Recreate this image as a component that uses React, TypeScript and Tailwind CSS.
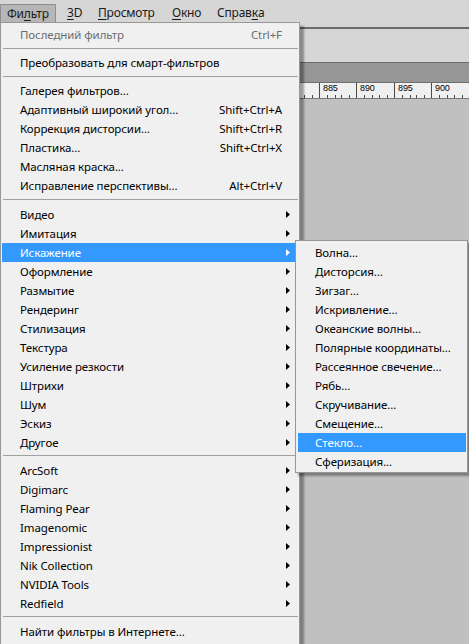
import React from "react";

type Row =
  | { kind: "item"; label: string; shortcut?: string; sub?: boolean; disabled?: boolean; active?: boolean }
  | { kind: "sep"; h: string; off: string };

const item = (label: string, extra: Partial<{ shortcut: string; sub: boolean; disabled: boolean; active: boolean }> = {}): Row => ({
  kind: "item",
  label,
  ...extra,
});

const mainRows: Row[] = [
  item("Последний фильтр", { shortcut: "Ctrl+F", disabled: true }),
  { kind: "sep", h: "h-[9px]", off: "pt-[4px]" },
  item("Преобразовать для смарт-фильтров"),
  { kind: "sep", h: "h-[9px]", off: "pt-[4px]" },
  item("Галерея фильтров..."),
  item("Адаптивный широкий угол...", { shortcut: "Shift+Ctrl+A" }),
  item("Коррекция дисторсии...", { shortcut: "Shift+Ctrl+R" }),
  item("Пластика...", { shortcut: "Shift+Ctrl+X" }),
  item("Масляная краска..."),
  item("Исправление перспективы...", { shortcut: "Alt+Ctrl+V" }),
  { kind: "sep", h: "h-[10px]", off: "pt-[4px]" },
  item("Видео", { sub: true }),
  item("Имитация", { sub: true }),
  item("Искажение", { sub: true, active: true }),
  item("Оформление", { sub: true }),
  item("Размытие", { sub: true }),
  item("Рендеринг", { sub: true }),
  item("Стилизация", { sub: true }),
  item("Текстура", { sub: true }),
  item("Усиление резкости", { sub: true }),
  item("Штрихи", { sub: true }),
  item("Шум", { sub: true }),
  item("Эскиз", { sub: true }),
  item("Другое", { sub: true }),
  { kind: "sep", h: "h-[9px]", off: "pt-[3px]" },
  item("ArcSoft", { sub: true }),
  item("Digimarc", { sub: true }),
  item("Flaming Pear", { sub: true }),
  item("Imagenomic", { sub: true }),
  item("Impressionist", { sub: true }),
  item("Nik Collection", { sub: true }),
  item("NVIDIA Tools", { sub: true }),
  item("Redfield", { sub: true }),
  { kind: "sep", h: "h-[9px]", off: "pt-[3px]" },
  item("Найти фильтры в Интернете..."),
];

const subRows = [
  "Волна...",
  "Дисторсия...",
  "Зигзаг...",
  "Искривление...",
  "Океанские волны...",
  "Полярные координаты...",
  "Рассеянное свечение...",
  "Рябь...",
  "Скручивание...",
  "Смещение...",
  "Стекло...",
  "Сферизация...",
];

function Arrow({ white }: { white?: boolean }) {
  return (
    <svg width="4" height="7" viewBox="0 0 4 7" className="ml-[4px]">
      <path d="M0 0 L4 3.5 L0 7 Z" fill={white ? "#ffffff" : "#000000"} />
    </svg>
  );
}

function MenuBar() {
  return (
    <div className="flex h-[27px] pt-[4px] bg-[#d6d6d6] text-[12px] tracking-[-0.2px] text-[#1a1a1a]">
      <div className="flex h-[18px] w-[56px] items-center border border-b-0 border-[#8e8e8e] bg-[#b6b6b6] pl-[6px]">
        Фи<span className="underline underline-offset-2">л</span>ьтр
      </div>
      <div className="flex h-[18px] w-[35px] items-center pl-[11px]">
        <span className="underline underline-offset-2">3</span>D
      </div>
      <div className="flex h-[18px] w-[74px] items-center pl-[7px]">
        <span className="underline underline-offset-2">П</span>росмотр
      </div>
      <div className="flex h-[18px] w-[45px] items-center pl-[7px]">
        <span className="underline underline-offset-2">О</span>кно
      </div>
      <div className="flex h-[18px] items-center pl-[7px]">
        Справ<span className="underline underline-offset-2">к</span>а
      </div>
    </div>
  );
}

function Ruler() {
  const labels = ["880", "885", "890", "895", "900"];
  return (
    <div className="flex h-[15px] bg-[#f0f0f0] pl-[281px] text-[9px] leading-none text-black font-['Liberation_Sans',sans-serif]">
      {labels.map((l, i) => (
        <div key={l} className={`flex h-full shrink-0 flex-col border-l border-[#4a4a4a] ${i % 2 === 0 ? "w-[38px]" : "w-[37px]"}`}>
          <span className="pl-[3px] pt-[1px]">{l}</span>
          <div className="mt-auto flex h-[3px]">
            <div className="w-[7px]" />
            <div className="w-[8px] border-l border-[#4a4a4a]" />
            <div className="w-[7px] border-l border-[#4a4a4a]" />
            <div className="w-[8px] border-l border-[#4a4a4a]" />
            <div className="w-[7px] border-l border-[#4a4a4a]" />
          </div>
        </div>
      ))}
    </div>
  );
}

function MainMenu() {
  return (
    <div className="absolute left-0 top-[22px] w-[300px] border border-b-0 border-[#979797] bg-[#f0f0f0] pt-[2px] pb-[4px] shadow-[4px_4px_2px_rgba(0,0,0,0.35)]">
      {mainRows.map((r, i) =>
        r.kind === "sep" ? (
          <div key={i} className={`${r.h} ${r.off} ml-[2px] mr-[1px]`}>
            <div className="h-px bg-[#a0a0a0]" />
          </div>
        ) : (
          <div
            key={i}
            className={`ml-px mr-px flex h-[19px] items-center pl-[18px] ${
              r.active ? "bg-[#3399ff] text-white" : r.disabled ? "text-[#6d6d6d]" : "text-black"
            }`}
          >
            <span className="flex-1 whitespace-nowrap">{r.label}</span>
            {r.shortcut && <span className="whitespace-nowrap">{r.shortcut}</span>}
            <div className="flex w-[16px] shrink-0 items-center">{r.sub && <Arrow white={r.active} />}</div>
          </div>
        )
      )}
    </div>
  );
}

function SubMenu() {
  return (
    <div className="absolute left-[295px] top-[240px] w-[173px] border border-[#979797] bg-[#f0f0f0] pt-[2px] pb-px shadow-[3px_3px_2px_rgba(0,0,0,0.35)]">
      {subRows.map((s) => (
        <div
          key={s}
          className={`ml-[2px] mr-px flex h-[19px] items-center pl-[17px] whitespace-nowrap ${
            s === "Стекло..." ? "bg-[#3399ff] text-white" : "text-black"
          }`}
        >
          {s}
        </div>
      ))}
    </div>
  );
}

export default function App() {
  return (
    <div className="relative h-[644px] w-[469px] overflow-hidden bg-[#c0c0c0] text-[11.5px] tracking-[-0.1px] font-['Noto_Sans',sans-serif]">
      <div className="flex h-full flex-col">
        <MenuBar />
        <div className="h-[2px] bg-[#6b6b6b]" />
        <div className="h-[33px] bg-[#d6d6d6]" />
        <div className="h-px bg-[#6b6b6b]" />
        <div className="h-[19px] bg-[#969696]" />
        <div className="h-px bg-[#6f6f6f]" />
        <Ruler />
        <div className="h-px bg-[#7a7a7a]" />
        <div className="flex-1 bg-[#c0c0c0]" />
      </div>
      <MainMenu />
      <SubMenu />
    </div>
  );
}
